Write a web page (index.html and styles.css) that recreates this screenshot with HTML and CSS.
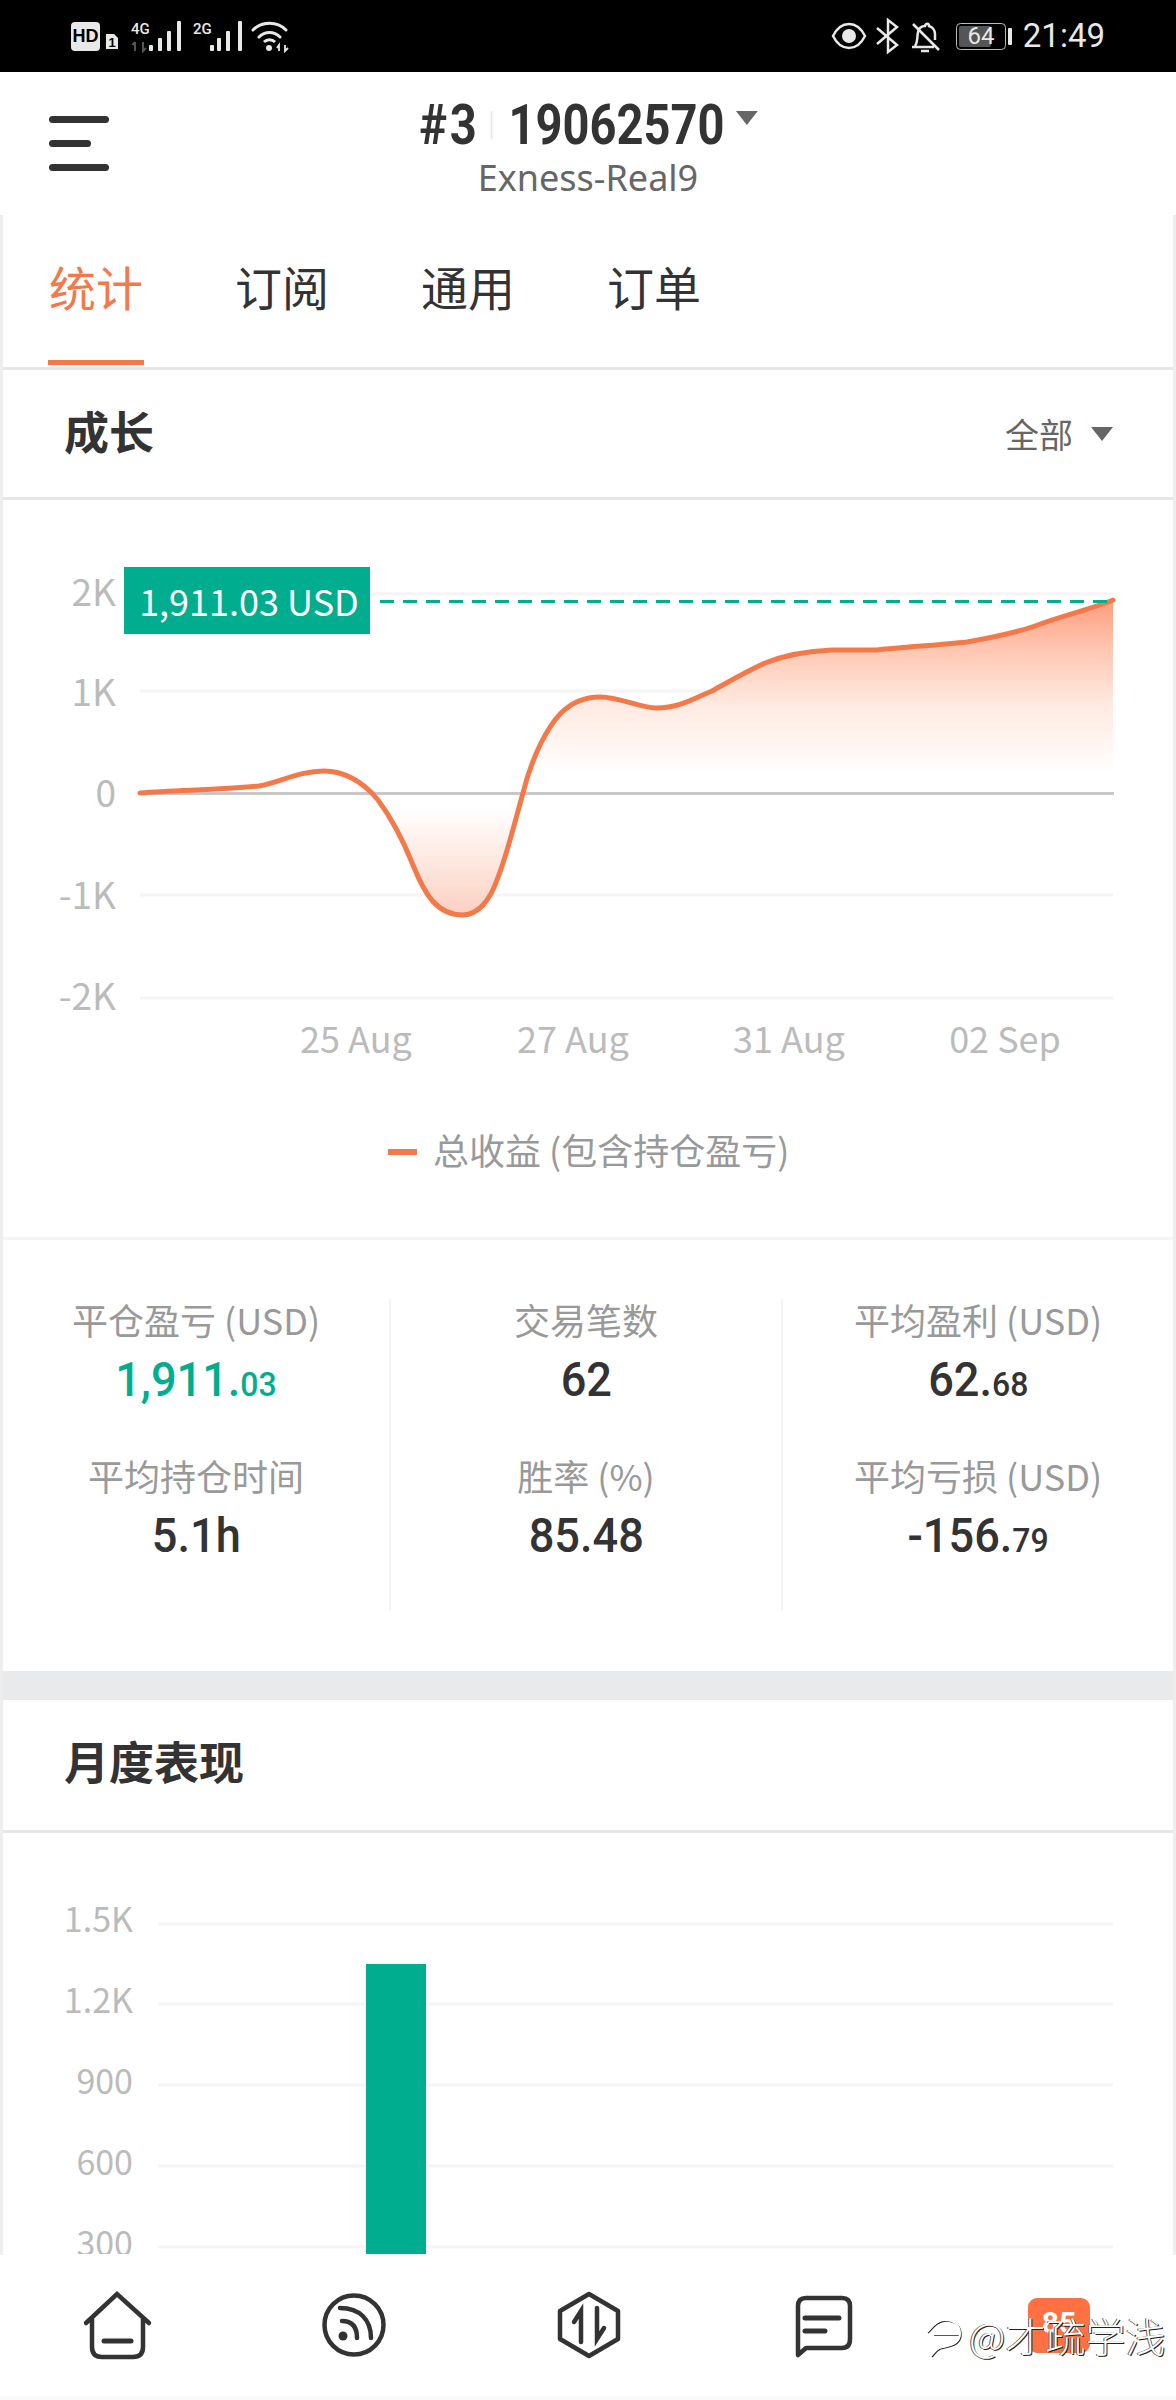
FILE: index.html
```html
<!DOCTYPE html>
<html lang="zh-CN">
<head>
    <meta charset="UTF-8">
    <meta name="viewport" content="width=device-width, initial-scale=1.0">
    <title>统计</title>
    <link rel="stylesheet" href="styles.css">
</head>
<body>
<div class="page">
    <!-- status bar -->
    <div class="status-bar">
        <svg class="status-icons" width="400" height="72" viewBox="0 0 400 72">
            <rect x="71" y="22" width="29" height="29" rx="4" fill="#e8e8e8"/>
            <text x="85.5" y="42" class="st-hd">HD</text>
            <path d="M106 34h8l4 4v11h-12z" fill="#e8e8e8"/>
            <text x="112" y="47" class="st-sim">1</text>
            <text x="131" y="34" class="st-net">4G</text>
            <path d="M135 51v-9M132.500 45l2.500-3M143 42v9l3-3" stroke="#555" stroke-width="2" fill="none"/>
            <g fill="#e8e8e8">
                <rect x="149" y="45" width="4" height="6" rx="1"/>
                <rect x="158" y="38" width="4" height="13" rx="1"/>
                <rect x="167" y="31" width="4" height="20" rx="1"/>
                <rect x="177" y="21" width="4" height="30" rx="1"/>
            </g>
            <text x="193" y="34" class="st-net">2G</text>
            <g fill="#e8e8e8">
                <rect x="210" y="45" width="4" height="6" rx="1"/>
                <rect x="217" y="38" width="4" height="13" rx="1"/>
                <rect x="226" y="31" width="4" height="20" rx="1"/>
                <rect x="238" y="21" width="4" height="30" rx="1"/>
            </g>
            <path d="M253 30c9-9 24-9 33 0M259 37c6-6 15-6 21 0" stroke="#e8e8e8" stroke-width="3" fill="none" stroke-linecap="round"/>
            <path d="M264 42c3-3 8-3 11 0" stroke="#e8e8e8" stroke-width="3" fill="none"/>
            <circle cx="269" cy="48" r="3" fill="#e8e8e8"/>
            <path d="M279 51v-6l-2 3M285 45v6l3-3" stroke="#e8e8e8" stroke-width="1.800" fill="none"/>
        </svg>
        <div class="status-right">
            <svg width="186" height="72" viewBox="830 0 186 72">
                <path d="M832 36c8-16 24-16 32 0c-8 16-24 16-32 0z" stroke="#e8e8e8" stroke-width="2.500" fill="none"/>
                <circle cx="848" cy="36" r="7" fill="#e8e8e8"/>
                <path d="M876 28l20 17l-9 7v-32l9 7l-20 17" stroke="#e8e8e8" stroke-width="2.500" fill="none"/>
                <path d="M911 47h22M914 46c3-4 2-10 3-14c1-4 4-6 7-6c1-3 4-3 4 0c3 1 6 4 6 8v6M920 51h8M912 24l26 26" stroke="#e8e8e8" stroke-width="2.500" fill="none"/>
                <rect x="955.500" y="23.500" width="49" height="26" rx="4" stroke="#bbb" fill="none"/>
                <rect x="958" y="26" width="32" height="21" rx="2" fill="#555"/>
                <rect x="1007" y="28" width="4" height="17" rx="1" fill="#e8e8e8"/>
                <text x="980" y="44" class="st-batt">64</text>
            </svg>
            <span class="clock">21:49</span>
        </div>
    </div>

    <header class="top-bar">
        <div class="menu-btn"><i></i><i class="short"></i><i></i></div>
        <div class="account">
            <div class="account-line">
                <span class="acc-no">#3</span><span class="acc-sep"></span><span class="acc-id">19062570</span><span class="caret caret-title"></span>
            </div>
            <div class="server">Exness-Real9</div>
        </div>
    </header>

    <div class="main">
        <div class="tabs">
            <div class="tab active">统计</div>
            <div class="tab">订阅</div>
            <div class="tab">通用</div>
            <div class="tab">订单</div>
        </div>

        <div class="section-head">
            <h2>成长</h2>
            <div class="range">全部<span class="caret caret-range"></span></div>
        </div>

        <!-- growth chart, viewBox uses page coordinates -->
        <svg class="chart growth" width="1170" height="740" viewBox="3 500 1170 737">
            <defs>
                <linearGradient id="areaFill" gradientUnits="userSpaceOnUse" x1="0" y1="600" x2="0" y2="915">
                    <stop offset="0" stop-color="#ff9c7c"/>
                    <stop offset="0.15" stop-color="#ffc5b0"/>
                    <stop offset="0.33" stop-color="#ffe9e1"/>
                    <stop offset="0.55" stop-color="#fff"/>
                    <stop offset="0.66" stop-color="#fff"/>
                    <stop offset="1" stop-color="#fbd0c1"/>
                </linearGradient>
            </defs>
            <g class="grid">
                <line x1="140" x2="1113" y1="594" y2="594"/>
                <line x1="140" x2="1113" y1="691" y2="691"/>
                <line x1="140" x2="1113" y1="895" y2="895"/>
                <line x1="140" x2="1113" y1="998" y2="998"/>
            </g>
            <path fill="url(#areaFill)" d="M378 793 C390 816 403 840 413 865 C425 895 437 915 463 915 C478 915 490 900 497 880 C507 855 514 825 523 793 Z"/>
            <path fill="url(#areaFill)" d="M523 793 C528 772 533 760 540 745 C550 725 565 697 600 697 C620 697 640 708 656 708 C680 708 695 698 712 691 C730 681 745 672 765 663 C785 655 808 651 832 650 C850 650 860 650 877 650 C905 647 940 645 967 642 C990 638 1012 634 1035 626 C1062 616 1088 610 1113 600 V793 Z"/>
            <line class="zero" x1="140" x2="1114" y1="793.500" y2="793.500"/>
            <path class="curve" d="M140 793 C180 790 220 790 259 786 C280 782 300 771 324 771 C342 771 362 780 378 800 C390 816 403 840 413 865 C425 895 437 915 463 915 C478 915 490 900 497 880 C507 855 514 825 523 793 C528 772 533 760 540 745 C550 725 565 697 600 697 C620 697 640 708 656 708 C680 708 695 698 712 691 C730 681 745 672 765 663 C785 655 808 651 832 650 C850 650 860 650 877 650 C905 647 940 645 967 642 C990 638 1012 634 1035 626 C1062 616 1088 610 1113 600"/>
            <line class="dash" x1="380" x2="1113" y1="601.500" y2="601.500"/>
            <rect x="124" y="567" width="246" height="67" fill="#00ae8f"/>
            <text x="249" y="616" class="tag-text">1,911.03 USD</text>
            <g class="y-label">
                <text x="116" y="606">2K</text>
                <text x="116" y="706">1K</text>
                <text x="116" y="807">0</text>
                <text x="116" y="909">-1K</text>
                <text x="116" y="1010">-2K</text>
            </g>
            <g class="x-label">
                <text x="356" y="1053">25 Aug</text>
                <text x="573" y="1053">27 Aug</text>
                <text x="789" y="1053">31 Aug</text>
                <text x="1005" y="1053">02 Sep</text>
            </g>
            <rect x="388" y="1149" width="29" height="6" fill="#f4794a"/>
            <text x="433" y="1165" class="legend">总收益 (包含持仓盈亏)</text>
        </svg>

        <div class="stats">
            <div class="stat-col">
                <div class="stat"><div class="stat-label">平仓盈亏 (USD)</div><div class="stat-value green"><span>1,911.<small>03</small></span></div></div>
                <div class="stat"><div class="stat-label">平均持仓时间</div><div class="stat-value"><span>5.1h</span></div></div>
            </div>
            <div class="stat-col">
                <div class="stat"><div class="stat-label">交易笔数</div><div class="stat-value"><span>62</span></div></div>
                <div class="stat"><div class="stat-label">胜率 (%)</div><div class="stat-value"><span>85.48</span></div></div>
            </div>
            <div class="stat-col">
                <div class="stat"><div class="stat-label">平均盈利 (USD)</div><div class="stat-value"><span>62.<small>68</small></span></div></div>
                <div class="stat"><div class="stat-label">平均亏损 (USD)</div><div class="stat-value"><span>-156.<small>79</small></span></div></div>
            </div>
        </div>

        <div class="band"></div>

        <div class="section-head month-head">
            <h2>月度表现</h2>
        </div>

        <svg class="chart monthly" width="1170" height="421" viewBox="3 1834 1170 421">
            <g class="grid">
                <line x1="158" x2="1113" y1="1925" y2="1925"/>
                <line x1="158" x2="1113" y1="2005" y2="2005"/>
                <line x1="158" x2="1113" y1="2086" y2="2086"/>
                <line x1="158" x2="1113" y1="2167" y2="2167"/>
                <line x1="158" x2="1113" y1="2248" y2="2248"/>
            </g>
            <rect x="366" y="1965" width="60" height="295" fill="#00ae8f"/>
            <g class="y-label">
                <text x="133" y="1933">1.5K</text>
                <text x="133" y="2014">1.2K</text>
                <text x="133" y="2095">900</text>
                <text x="133" y="2176">600</text>
                <text x="133" y="2257">300</text>
            </g>
        </svg>
    </div>

    <nav class="bottom-nav">
        <svg width="1176" height="141" viewBox="0 2255 1176 141" class="nav-icons">
            <!-- home -->
            <path d="M86 2323L117 2294L149 2323M92 2318V2347Q92 2357 102 2357H133Q143 2357 143 2347V2318"/>
            <path d="M104 2341H131" stroke-width="5"/>
            <!-- feed -->
            <circle cx="354" cy="2325" r="29.500"/>
            <path d="M342 2321C352 2321 357 2327 357 2338M340 2308C360 2308 371 2320 371 2338"/>
            <circle cx="343" cy="2336" r="4.500" class="solid"/>
            <!-- trade -->
            <path d="M589 2294L618 2311V2339L589 2356L560 2339V2311Z" stroke-linejoin="round"/>
            <path d="M581 2342V2311L574 2322M597 2308V2339L604 2328"/>
            <!-- messages -->
            <path d="M798 2355V2306Q798 2298 806 2298H842Q850 2298 850 2306V2339Q850 2348 842 2348H806Z" stroke-linejoin="round"/>
            <path d="M805 2318H839M805 2331H825" stroke-width="5"/>
        </svg>
        <div class="badge">85</div>
        <div class="watermark">
            <svg class="wm-logo" width="38" height="46" viewBox="0 0 38 46">
                <path d="M2 20C8 14 12 8 20 8C30 8 35 14 35 22C35 32 24 34 14 36C10 38 8 42 6 44M8 22H34" fill="none" stroke="#222" stroke-width="1.500" transform="translate(1 1)"/>
                <path d="M2 20C8 14 12 8 20 8C30 8 35 14 35 22C35 32 24 34 14 36C10 38 8 42 6 44M8 22H34" fill="none" stroke="#fff" stroke-width="2"/>
            </svg>
            <span>@才疏学浅</span>
        </div>
    </nav>
</div>
</body>
</html>
```

FILE: styles.css
```css
* {
    box-sizing: border-box;
}
body {
    margin: 0;
    background: #fff;
    font-family: "Noto Sans CJK SC", "Noto Sans", sans-serif;
    color: #333;
}
.page {
    position: relative;
    width: 1176px;
    height: 2400px;
    overflow: hidden;
    display: flex;
    flex-direction: column;
}

/* status bar */
.status-bar {
    height: 72px;
    flex: none;
    background: #000;
    display: flex;
    justify-content: space-between;
}
.status-icons {
    display: block;
}
.status-right {
    display: flex;
    align-items: center;
    padding-right: 71px;
}
.clock {
    font-family: Roboto, sans-serif;
    font-size: 33px;
    line-height: 72px;
    color: #e8e8e8;
    margin-left: 6px;
}
.st-hd {
    font: 700 18px "Liberation Sans", sans-serif;
    text-anchor: middle;
    fill: #000;
}
.st-sim {
    font: 700 13px "Liberation Sans", sans-serif;
    text-anchor: middle;
    fill: #000;
}
.st-net {
    font: 500 15px Roboto, sans-serif;
    fill: #e8e8e8;
}
.st-batt {
    font: 400 24px Roboto, sans-serif;
    text-anchor: middle;
    fill: #e8e8e8;
}

/* header */
.top-bar {
    height: 143px;
    flex: none;
    position: relative;
    display: flex;
    justify-content: center;
    background: #fff;
}
.menu-btn {
    position: absolute;
    left: 49px;
    top: 44px;
    width: 60px;
}
.menu-btn i {
    display: block;
    height: 7px;
    margin-bottom: 17px;
    border-radius: 4px;
    background: #333;
}
.menu-btn i.short {
    width: 42px;
}
.account {
    text-align: center;
    padding-top: 22px;
}
.account-line {
    display: flex;
    align-items: center;
    justify-content: center;
    height: 56px;
    margin-top: 3px;
    font-family: Roboto, sans-serif;
    font-weight: 700;
    font-size: 56px;
    color: #333;
    transform: translateX(1px) scaleX(0.84);
}
.acc-no {
    letter-spacing: 3px;
}
.acc-sep {
    width: 2px;
    height: 28px;
    background: #e6e6e6;
    margin: 0 19px 0 14px;
}
.caret {
    display: inline-block;
    width: 0;
    height: 0;
    border-style: solid;
    border-color: #666 transparent transparent;
}
.caret-title {
    border-width: 14px 13px 0;
    margin-left: 14px;
    margin-top: -14px;
}
.server {
    font-family: "Noto Sans", sans-serif;
    font-size: 36px;
    line-height: 44px;
    color: #666;
    margin-top: 3px;
}

/* content */
.main {
    flex: 1;
    min-height: 0;
    overflow: hidden;
    border-left: 3px solid #eee;
    border-right: 3px solid #eee;
    background: #fff;
}
.tabs {
    height: 155px;
    display: flex;
    gap: 90px;
    padding-left: 45px;
    border-bottom: 3px solid #e6e6e6;
}
.tab {
    width: 96px;
    height: 150px;
    line-height: 142px;
    font-size: 47px;
    color: #333;
    text-align: center;
}
.tab.active {
    color: #f4794a;
    border-bottom: 5px solid #f4794a;
}
.section-head {
    height: 130px;
    display: flex;
    align-items: center;
    justify-content: space-between;
    padding: 0 60px 0 61px;
    border-bottom: 3px solid #e6e6e6;
}
.section-head h2 {
    margin: 0 0 6px;
    font-size: 45px;
    font-weight: 700;
    color: #333;
}
.range {
    display: flex;
    align-items: center;
    font-size: 34px;
    color: #666;
}
.caret-range {
    border-width: 14px 11.500px 0;
    margin-left: 18px;
}
.chart {
    display: block;
}
.growth {
    border-bottom: 3px solid #f5f5f5;
}
.grid line {
    stroke: #f5f5f5;
    stroke-width: 3;
}
.zero {
    stroke: #c8c8c8;
    stroke-width: 3;
}
.curve {
    fill: none;
    stroke: #f4794a;
    stroke-width: 5;
    stroke-linecap: round;
}
.dash {
    stroke: #00ae8f;
    stroke-width: 3;
    stroke-dasharray: 14 9;
}
.tag-text {
    font-size: 36px;
    fill: #fff;
    text-anchor: middle;
}
.y-label text {
    font-size: 34px;
    fill: #bbb;
    text-anchor: end;
}
.growth .y-label text {
    font-size: 37px;
}
.x-label text {
    font-size: 36px;
    fill: #bbb;
    text-anchor: middle;
}
.legend {
    font-size: 36px;
    fill: #999;
}

/* stats */
.stats {
    display: grid;
    grid-template-columns: 388px 392px 390px;
    padding-top: 59px;
    height: 431px;
}
.stat-col {
    height: 312px;
    border-right: 2px solid #f5f5f5;
}
.stat-col:last-child {
    border-right: none;
}
.stat {
    height: 159px;
    text-align: center;
}
.stat-label {
    font-size: 36px;
    line-height: 46px;
    margin-top: -3px;
    color: #999;
}
.stat-value {
    font-family: Roboto, sans-serif;
    font-size: 48px;
    font-weight: 500;
    line-height: 66px;
    padding-top: 5px;
    color: #333;
}
.stat-value span {
    display: inline-block;
    transform: scaleX(0.94);
}
.stat-value small {
    font-size: 34px;
}
.stat-value.green {
    color: #00ae8f;
}
.band {
    height: 29px;
    background: #e9eaec;
}
.month-head {
    height: 133px;
    padding-bottom: 3px;
}

/* bottom navigation */
.bottom-nav {
    height: 145px;
    flex: none;
    position: relative;
    background: #fff;
    border-bottom: 4px solid #fafafa;
}
.nav-icons {
    display: block;
    fill: none;
    stroke: #333;
    stroke-width: 4.500;
    stroke-linecap: round;
}
.nav-icons .solid {
    fill: #333;
    stroke: none;
}
.badge {
    position: absolute;
    left: 1028px;
    top: 43px;
    width: 62px;
    height: 55px;
    border-radius: 9px;
    background: #ff7043;
    color: #fff;
    font-family: Roboto, sans-serif;
    font-weight: 700;
    font-size: 30px;
    line-height: 50px;
    text-align: center;
}
.watermark {
    position: absolute;
    left: 925px;
    top: 52px;
    display: flex;
    align-items: center;
    gap: 6px;
    font-size: 40px;
    line-height: 56px;
    font-weight: 300;
    color: #fff;
    white-space: nowrap;
    text-shadow: 1px 1px 0 #222, -1px 0 0 #555;
}
.wm-logo {
    display: block;
    flex: none;
}
```
